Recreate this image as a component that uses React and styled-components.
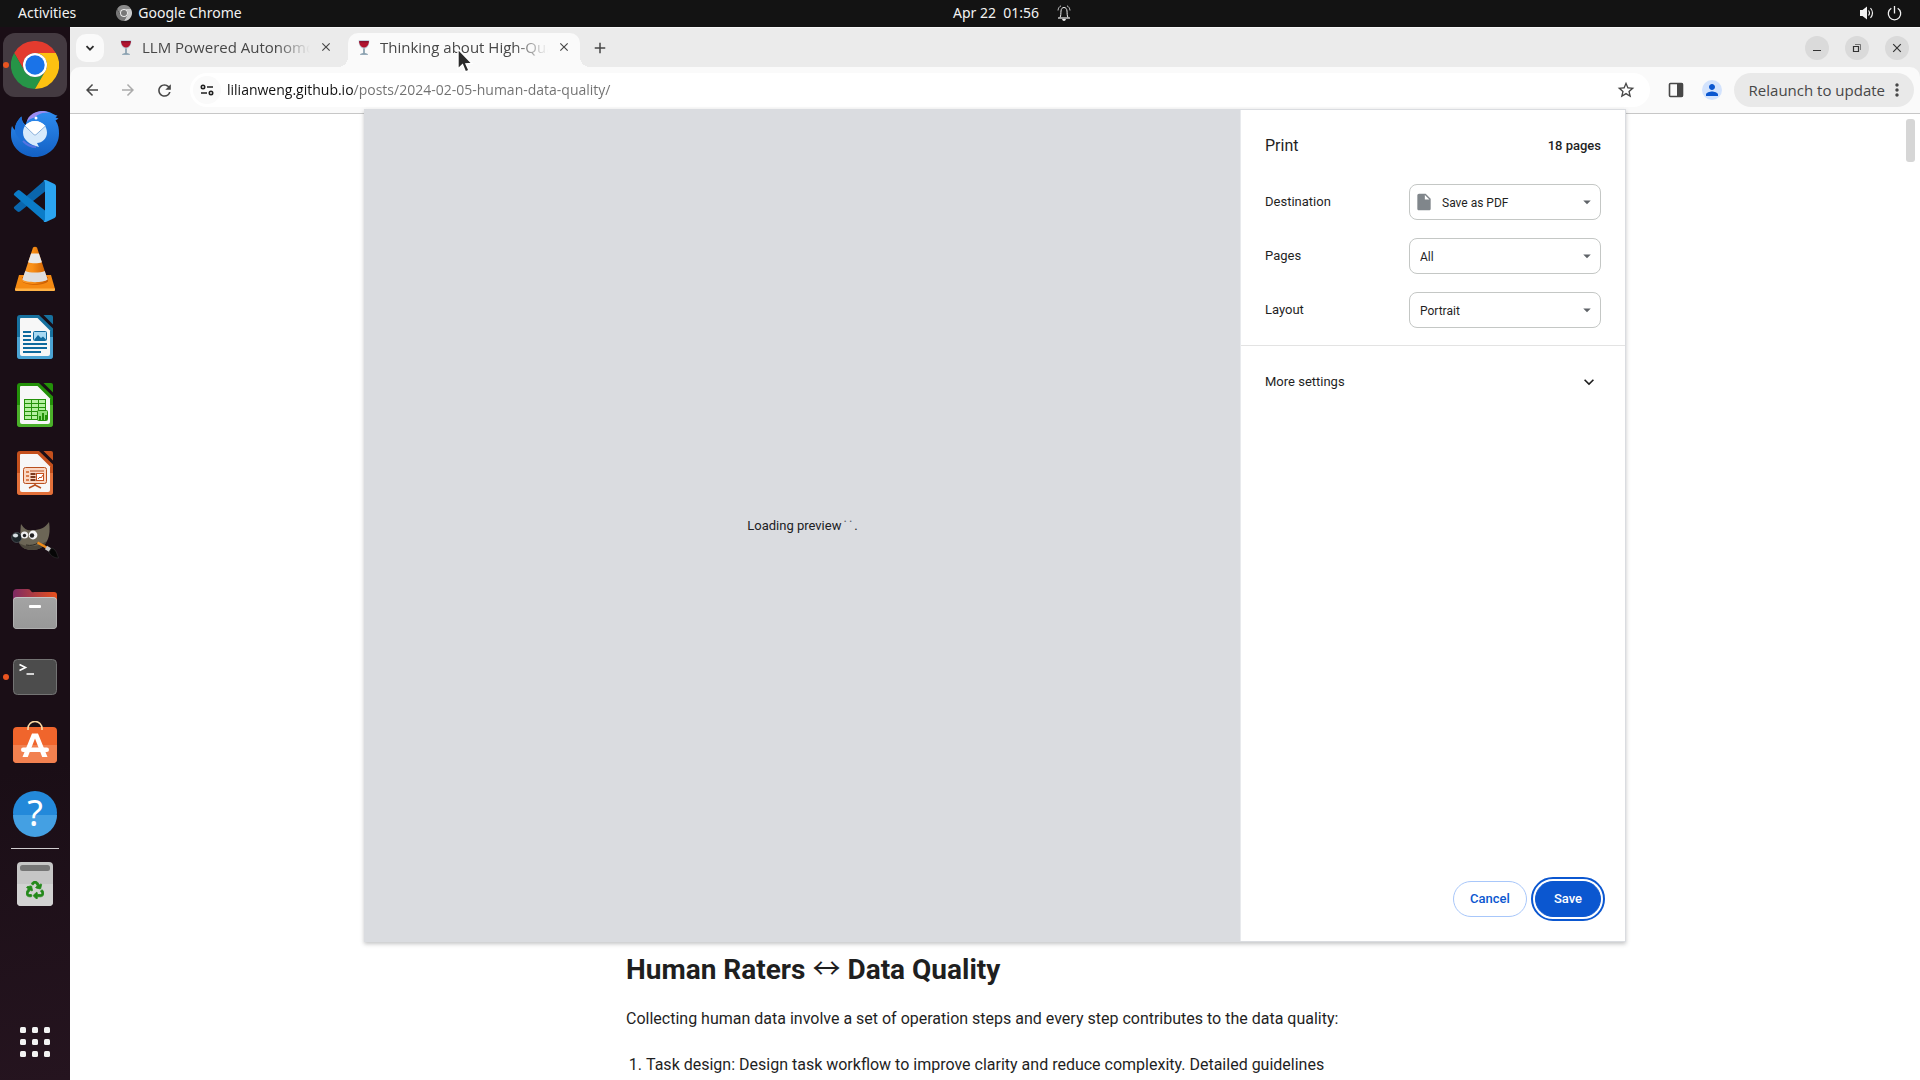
import React from 'react';
import styled, { createGlobalStyle, css } from 'styled-components';
import {
  MdArrowBack,
  MdArrowForward,
  MdRefresh,
  MdStarOutline,
  MdPerson,
  MdMoreVert,
  MdInsertDriveFile,
  MdArrowDropDown,
  MdKeyboardArrowDown,
  MdClose,
  MdAdd,
} from 'react-icons/md';
import { FaRecycle } from 'react-icons/fa';

const shellFont = "'Noto Sans', 'Open Sans', sans-serif";
const browserFont = "'Open Sans', 'Noto Sans', sans-serif";
const pageFont = "Roboto, 'Noto Sans', sans-serif";

const GlobalStyle = createGlobalStyle`
  *, *::before, *::after {
    box-sizing: border-box;
  }

  body {
    margin: 0;
    overflow: hidden;
    font-family: ${shellFont};
  }

  button, input, select {
    margin: 0;
    padding: 0;
    border: 0;
    background: none;
    font: inherit;
    color: inherit;
  }

  svg {
    display: block;
    flex: none;
  }
`;

/* ---------- desktop ---------- */

const Desktop = styled.div`
  display: grid;
  grid-template-columns: 70px minmax(0, 1fr);
  grid-template-rows: 27px minmax(0, 1fr);
  height: 100vh;
  background: #1b0f17;
`;

const TopBar = styled.header`
  grid-column: 1 / -1;
  display: grid;
  grid-template-columns: 1fr auto 1fr;
  align-items: center;
  padding-bottom: 1px;
  background: #131313;
  color: #f2f2f2;
  font-size: 14px;
  line-height: 20px;
`;

const TopLeft = styled.div`
  display: flex;
  align-items: center;
  gap: 40px;
  padding-left: 18px;
`;

const TopButton = styled.button`
  display: flex;
  align-items: center;
  gap: 6px;
  white-space: pre;
`;

const Clock = styled(TopButton)`
  gap: 18px;
  padding-left: 104px;
`;

const TopRight = styled.div`
  display: flex;
  justify-content: flex-end;
  align-items: center;
  gap: 12px;
  padding-right: 18px;
`;

const Dock = styled.nav`
  display: flex;
  flex-direction: column;
  align-items: center;
  gap: 4px;
  padding: 6px 0;
  background: linear-gradient(170deg, #1a0e16 70%, #25141f 100%);
`;

const DockItem = styled.button`
  position: relative;
  display: flex;
  justify-content: center;
  align-items: center;
  width: 64px;
  height: 64px;
  border-radius: 12px;
  background: ${(props) => (props.$active ? '#443a41' : 'transparent')};

  ${(props) =>
    props.$running &&
    css`
      &::before {
        content: '';
        position: absolute;
        left: 0;
        width: 6px;
        height: 6px;
        border-radius: 50%;
        background: #e95420;
      }
    `}
`;

const DockLine = styled.hr`
  width: 48px;
  height: 1px;
  margin: -1px 0;
  border: 0;
  background: #d0cdcf;
`;

const DockSpacer = styled.div`
  flex: 1;
`;

/* ---------- browser window ---------- */

const Browser = styled.div`
  position: relative;
  display: flex;
  flex-direction: column;
  min-height: 0;
  background: #fff;
  font-family: ${browserFont};
`;

const TabStrip = styled.div`
  display: flex;
  align-items: center;
  gap: 6px;
  height: 40px;
  padding: 0 11px 0 6px;
  border-top: 1px solid #f7f7f7;
  background: #ebebeb;
  color: #474747;
`;

const TabSearch = styled.button`
  display: grid;
  place-items: center;
  width: 28px;
  height: 28px;
  border-radius: 10px;
  background: #fafafa;
`;

const Tab = styled.div`
  position: relative;
  display: flex;
  align-self: flex-end;
  align-items: center;
  gap: 8px;
  width: 232px;
  height: 34px;
  padding: 0 8px 7px;
  border-radius: 10px 10px 0 0;

  ${(props) =>
    props.$active &&
    css`
      background: #fafafa;

      &::before,
      &::after {
        content: '';
        position: absolute;
        bottom: 0;
        width: 10px;
        height: 10px;
      }

      &::before {
        right: 100%;
        background: radial-gradient(circle at 0 0, transparent 10px, #fafafa 10px);
      }

      &::after {
        left: 100%;
        background: radial-gradient(circle at 100% 0, transparent 10px, #fafafa 10px);
      }
    `}
`;

const TabTitle = styled.span`
  flex: 1;
  overflow: hidden;
  white-space: nowrap;
  font-size: 15px;
  line-height: 20px;
  mask-image: linear-gradient(90deg, #000 80%, transparent);
`;

const IconButton = styled.button`
  display: grid;
  place-items: center;
  width: ${(props) => props.$size || 28}px;
  height: ${(props) => props.$size || 28}px;
  color: ${(props) => (props.disabled ? '#ababab' : '#474747')};
`;

const WindowControls = styled.div`
  display: flex;
  gap: 16px;
  margin-left: auto;
`;

const WindowButton = styled.button`
  display: grid;
  place-items: center;
  width: 24px;
  height: 24px;
  border-radius: 50%;
  background: #dadada;
  color: #333;
`;

const ToolbarBack = styled.div`
  background: #ebebeb;
`;

const Toolbar = styled.div`
  display: flex;
  align-items: center;
  gap: 8px;
  height: 47px;
  padding: 0 6px 0 8px;
  border-bottom: 1px solid #c7c7c7;
  border-radius: 10px 10px 0 0;
  background: #fafafa;
`;

const Omnibox = styled.form`
  display: flex;
  flex: 1;
  align-items: center;
  gap: 6px;
  height: 34px;
  margin: 0 4px;
  padding: 0 10px 0 3px;
  border-radius: 17px;
  background: #fff;
`;

const SiteInfo = styled.button`
  display: grid;
  place-items: center;
  width: 28px;
  height: 28px;
  border-radius: 50%;
  background: #fafafa;
  color: #1f1f1f;
`;

const Address = styled.input`
  flex: 1;
  min-width: 0;
  padding-bottom: 1px;
  outline: 0;
  background: linear-gradient(90deg, #111 127px, #707070 127px);
  background-clip: text;
  color: transparent;
  font-size: 14px;
  line-height: 20px;
`;

const Avatar = styled.button`
  display: grid;
  place-items: center;
  width: 20px;
  height: 20px;
  margin: 0 4px;
  border-radius: 50%;
  background: #d3e3fd;
  color: #0b57d0;
`;

const Relaunch = styled.button`
  display: flex;
  align-items: center;
  gap: 2px;
  height: 34px;
  padding: 0 7px 1px 15px;
  border-radius: 17px;
  background: #e9e9e9;
  color: #474747;
  font-size: 15px;
  line-height: 20px;
  white-space: nowrap;
`;

/* ---------- page ---------- */

const Page = styled.main`
  display: flex;
  flex: 1;
  min-height: 0;
`;

const Article = styled.article`
  display: flex;
  flex: 1;
  flex-direction: column;
  justify-content: flex-end;
  width: 100%;
  max-width: 720px;
  margin: 0 auto;
  padding-bottom: 2px;
  font-family: ${pageFont};
  font-size: 16px;
  line-height: 26px;
  color: #1f1f1f;

  h2 {
    margin: 0 0 18px;
    font-size: 28px;
    line-height: 36px;
  }

  p {
    margin: 0 0 20px;
  }

  ol {
    margin: 0;
    padding-left: 20px;
  }
`;

const Arrow = styled.span`
  font-family: 'Noto Sans CJK JP', sans-serif;
  font-weight: 400;
  line-height: 1;
`;

const ScrollTrack = styled.div`
  width: 18px;
  padding: 5px 5px 0 4px;
`;

const ScrollThumb = styled.div`
  height: 43px;
  border-radius: 3px;
  background: #d6d6d6;
`;

/* ---------- print dialog ---------- */

const Dialog = styled.section`
  position: absolute;
  top: 82px;
  right: 0;
  left: 0;
  display: flex;
  width: 1262px;
  max-width: 90%;
  height: calc(100% - 220px);
  margin: 0 auto;
  border: 1px solid #dadce0;
  background: #fff;
  box-shadow: 0 2px 4px rgba(60, 64, 67, 0.3);
  font-family: ${pageFont};
  font-size: 13px;
  line-height: 20px;
  color: #1f1f1f;
`;

const Preview = styled.div`
  display: grid;
  flex: 1;
  place-items: center;
  background: #dadce0;
  color: #202124;
`;

const LoadingDot = styled.span`
  display: inline-block;
  padding-left: 2px;
  color: ${(props) => (props.$raised ? '#5f6368' : 'inherit')};
  transform: translateY(${(props) => (props.$raised ? -8 : 0)}px);
`;

const Settings = styled.form`
  display: flex;
  flex-direction: column;
  width: 385px;
  border-left: 1px solid #e8eaed;
`;

const SettingsHead = styled.div`
  display: flex;
  justify-content: space-between;
  align-items: center;
  padding: 24px;

  h1 {
    margin: 0;
    font-size: 16px;
    font-weight: 400;
    line-height: 24px;
  }

  strong {
    font-weight: 500;
  }
`;

const Fields = styled.div`
  display: flex;
  flex-direction: column;
  gap: 18px;
  padding: 2px 24px 17px;
  border-bottom: 1px solid #e3e3e3;
`;

const Field = styled.div`
  display: grid;
  grid-template-columns: 144px 1fr;
  align-items: center;
`;

const SelectBox = styled.div`
  display: grid;
  grid-template-columns: 30px 1fr 28px;
  align-items: center;
  color: #5f6368;

  select {
    grid-area: 1 / 1 / 2 / -1;
    height: 36px;
    padding: 1px 0 0 ${(props) => (props.$icon ? 32 : 10)}px;
    appearance: none;
    border: 1px solid #c4c7c5;
    border-radius: 8px;
    font-size: 12px;
    color: #1f1f1f;
  }

  svg {
    grid-area: 1 / 1;
    justify-self: center;
    pointer-events: none;
  }

  svg:last-child {
    grid-area: 1 / 3;
  }
`;

const MoreSettings = styled.button`
  display: flex;
  justify-content: space-between;
  align-items: center;
  height: 72px;
  padding: 0 26px 0 24px;
`;

const Actions = styled.div`
  display: flex;
  justify-content: flex-end;
  gap: 8px;
  margin-top: auto;
  padding: 24px;
`;

const ActionButton = styled.button`
  height: 36px;
  padding: 0 ${(props) => (props.$primary ? 18 : 16)}px;
  border: 1px solid ${(props) => (props.$primary ? '#0b57d0' : '#a8c7fa')};
  border-radius: 18px;
  background: ${(props) => (props.$primary ? '#0b57d0' : '#fff')};
  color: ${(props) => (props.$primary ? '#fff' : '#0b57d0')};
  font-weight: 500;

  ${(props) =>
    props.$primary &&
    css`
      outline: 2px solid #0b57d0;
      outline-offset: 2px;
    `}
`;

const Pointer = styled.svg`
  position: absolute;
  top: 20px;
  left: 386px;
`;

/* ---------- drawings ---------- */

const Icon48 = ({ children }) => (
  <svg width="48" height="48" viewBox="0 0 48 48" fill="none" aria-hidden="true">
    {children}
  </svg>
);

const ChromeIcon = () => (
  <Icon48>
    <path fill="#e33b2e" d="M24 12h20.8A24 24 0 0 0 3.2 12l10.4 18A12 12 0 0 1 24 12z" />
    <path fill="#269547" d="M3.2 12A24 24 0 0 0 24 48l10.4-18a12 12 0 0 1-20.8 0z" />
    <path fill="#fdc111" d="M44.8 12A24 24 0 0 1 24 48l10.4-18A12 12 0 0 0 24 12z" />
    <circle cx="24" cy="24" r="12" fill="#fff" />
    <circle cx="24" cy="24" r="9.7" fill="#1a73e8" />
  </Icon48>
);

const ThunderbirdIcon = () => (
  <Icon48>
    <defs>
      <linearGradient id="tb-body" x1="0" y1="0" x2="0" y2="1">
        <stop offset="0" stopColor="#2f8df0" />
        <stop offset="1" stopColor="#1360c4" />
      </linearGradient>
    </defs>
    <path
      fill="url(#tb-body)"
      d="M1 17c1 2 2 3 3 4 0-6 3-10 6.500-13.500 0 4 2 7 4 8.500 2-8 9-14 18-14 7 0 9 4 14 4.500l-2 2 3 1-3 2c3 4 3.500 8 3.500 13C48 38 37 48 24 48S0 38 0 26c0-4 0-6 1-9z"
    />
    <path fill="#1b6fd6" d="M4 21c0-6 3-10 6.500-13.500 0 5 3 9 5 11-3 5-4 9-2 14-5-2-9-6-9.500-11.500z" />
    <path fill="#9a8cf2" d="M22 4.500C27 1.500 34 1 38 4c-7-1-10 1-14 4-3 2-5 1-8 5 0-3 2-6 6-8.500z" />
    <circle cx="25" cy="9" r="1.500" fill="#fff" />
    <path
      fill="#d7eafb"
      d="M24 12c7 0 12 5 12 11.500 0 6-5 10.500-10 10.500l2 4c-9-2-16-7-16-14.500C12 17 17 12 24 12z"
    />
    <path fill="#fff" d="M14 17c2-3 6-5 10-5s8 2 10.500 5L25 26q-1 1-2 0z" />
    <path stroke="#86aedb" strokeWidth="1" d="M14 17l9 8.700q1 1 2 0l9.500-8.700" />
    <path stroke="#6d76ea" strokeWidth="2" d="M12 32c3 3 7 6 13 6" opacity=".7" />
  </Icon48>
);

const CodeIcon = () => (
  <Icon48>
    <path fill="#0a66ad" d="M34 3L3.500 29.500q-1.500 1 0 2.500l3 2.500q1 .8 2.500 0L34 14.500z" />
    <path fill="#0b7cc8" d="M34 45L3.500 18.500q-1.500-1 0-2.500l3-2.500q1-.8 2.500 0L34 33.500z" />
    <path fill="#2ba4f0" d="M32.500 44.500q1.500 1 3 .2l8-3.800q1.500-.8 1.500-2.400V9.500q0-1.600-1.500-2.400l-8-3.800q-1.500-.8-3 .2Q34 4 34 6v36q0 2-1.500 2.500z" />
  </Icon48>
);

const VlcIcon = () => (
  <Icon48>
    <defs>
      <linearGradient id="cone" x1="0" y1="0" x2="1" y2="0">
        <stop offset="0" stopColor="#f79a2e" />
        <stop offset=".4" stopColor="#f98f16" />
        <stop offset="1" stopColor="#c65a00" />
      </linearGradient>
    </defs>
    <path fill="#f58a12" d="M8 30h32l4 14q.4 2-1.500 2h-37Q3.600 46 4 44z" />
    <path fill="#ffb347" d="M4 43.500h40v1.200q0 1.300-1.500 1.300h-37Q4 46 4 44.700z" />
    <path fill="#cc5d00" d="M11 36c3 5 23 5 26 0v-4H11z" />
    <path fill="url(#cone)" d="M22 2.500Q24 1 26 2.500L37 36c-3 4-23 4-26 0z" />
    <path fill="#e9e9e9" d="M20.100 8.500h7.800l3 8.700c-3 1.500-10.800 1.500-13.800 0z" />
    <path fill="#dedede" d="M14.300 26c4 2 15.400 2 19.400 0l3 8.500c-4 3.500-21.400 3.500-25.400 0z" />
  </Icon48>
);

const DocIcon = ({ color, dark, children }) => (
  <Icon48>
    <path fill={dark} d="M9 2h19L42 15.500V43q0 3-3 3H9q-3 0-3-3V5q0-3 3-3z" />
    <path fill={color} d="M6 24h36v19q0 3-3 3H9q-3 0-3-3z" />
    <path fill="#f7f7f7" d="M10 5h16.500L39 17.500V41q0 2-2 2H11q-2 0-2-2V6q0-1 1-1z" />
    <path fill={dark} d="M32.500 2H40q2 0 2 2v7.500z" />
    {children}
  </Icon48>
);

const WriterIcon = () => (
  <DocIcon color="#4ba3d3" dark="#17719f">
    <path stroke="#0f6a9e" strokeWidth="2" d="M12 19h8M12 23h8M12 27h8M12 31h24M12 35h24M12 39h18" />
    <rect x="22.500" y="18.500" width="13" height="9" fill="#a6d8f2" stroke="#0f6a9e" rx="1" />
    <path fill="#0f6a9e" d="M23 27l4-5 3 3 2-1.500 3.500 3.500z" />
  </DocIcon>
);

const CalcIcon = () => (
  <DocIcon color="#4bb02a" dark="#239109">
    <rect x="13.500" y="18.500" width="21" height="20" fill="#b4f0a0" stroke="#239109" />
    <path stroke="#239109" d="M13 22.500h22M13 26.500h22M13 30.500h22M13 34.500h22M20.500 18v21M27.500 18v21" />
    <rect x="26.500" y="29.500" width="10" height="10" rx="1" fill="#8fe077" stroke="#239109" />
    <path fill="#239109" d="M28 35h2v4h-2zM31 32h2v7h-2zM34 34h2v5h-2z" />
  </DocIcon>
);

const ImpressIcon = () => (
  <DocIcon color="#e2703a" dark="#c4501d">
    <rect x="12.500" y="18.500" width="23" height="16" rx="2" fill="#fbd8c4" stroke="#b8501f" />
    <path stroke="#d9804f" strokeWidth="2" d="M15 23h3M15 27h3M15 31h3" />
    <path stroke="#7d3a1c" strokeWidth="2" d="M19.500 25h5M19.500 28h5M19.500 31h5" />
    <path stroke="#b8501f" strokeWidth="1" d="M19 22h14" />
    <rect x="25.500" y="24.500" width="7" height="7" fill="#fff" stroke="#c4501d" />
    <path stroke="#c4501d" d="M27 30l2-2 1 1 2-3" />
    <path stroke="#b8501f" strokeWidth="1.500" d="M24 35v2M24 36l-6 3M24 36l6 3" />
  </DocIcon>
);

const GimpIcon = () => (
  <Icon48>
    <path
      fill="#6c6656"
      d="M10 7c4 6 7 7 12 6 7 0 12-2 16-8 1 6 1 14-2 19-3 6-8 9-15 9-6 0-10-2-13-7 2-6 1-13 2-19z"
    />
    <path fill="#4c473c" d="M8 26c6 4 18 5 28-2-3 6-8 9-15 9-6 0-10-2-13-7z" />
    <circle cx="5.700" cy="20.500" r="5" fill="#1c2428" stroke="#5d676c" strokeWidth=".6" />
    <ellipse cx="4.500" cy="18.500" rx="2.600" ry="2" fill="#d6dee2" />
    <circle cx="13.500" cy="18" r="3.600" fill="#eee" />
    <circle cx="13.500" cy="18.500" r="1.700" fill="#222" />
    <circle cx="22" cy="18" r="4.400" fill="#f6f6f6" />
    <circle cx="21" cy="18.500" r="2.200" fill="#222" />
    <path stroke="#2b2821" d="M15 28c5 1 9 0 12-2" />
    <path stroke="#f08b18" strokeWidth="2.500" d="M26.500 25.500l9 5" />
    <path stroke="#c9c9c9" strokeWidth="4" d="M35 30.500l4 2.500" />
    <path fill="#060606" stroke="#3a3a3a" strokeWidth=".5" d="M38 35l2.500-4c4 1 5 4 7 10-4 0-8-2-9.500-6z" />
  </Icon48>
);

const FilesIcon = () => (
  <Icon48>
    <defs>
      <linearGradient id="folder" x1="0" y1="0" x2="1" y2="0">
        <stop offset="0" stopColor="#7d2a63" />
        <stop offset="1" stopColor="#e8511d" />
      </linearGradient>
      <linearGradient id="folder-front" x1="0" y1="0" x2="0" y2="1">
        <stop offset="0" stopColor="#a3a3a3" />
        <stop offset="1" stopColor="#989898" />
      </linearGradient>
    </defs>
    <path fill="url(#folder)" d="M2 8q0-4 4-4h11q2 0 3 2t3 1h20q3 0 3 3v8H2z" />
    <rect x="2" y="12" width="44" height="32" rx="4" fill="#c4c4c4" />
    <rect x="2.500" y="13" width="43" height="30.500" rx="3.500" fill="url(#folder-front)" />
    <rect x="18" y="20" width="12" height="3" rx="1" fill="#fff" />
  </Icon48>
);

const TerminalIcon = () => (
  <Icon48>
    <rect x="2.500" y="6.500" width="43" height="35" rx="4" fill="#4c4c4c" stroke="#737373" />
    <path stroke="#fff" strokeWidth="1.600" d="M8.500 11.500l6 3-6 3M15.500 21h7.500" />
  </Icon48>
);

const SoftwareIcon = () => (
  <Icon48>
    <rect x="2" y="6" width="44" height="36" rx="4" fill="#f0652c" />
    <path fill="#f28150" d="M2 24h44v14q0 4-4 4H6q-4 0-4-4z" />
    <path stroke="#fbd9a5" strokeWidth="1.600" d="M17 9V7.500a7 7 0 0 1 14 0V9" />
    <path fill="#fff" d="M21 12.500h6L36.500 36h-5.300L24 17.500 16.800 36h-5.300z" />
    <rect x="10" y="26.500" width="28" height="4.500" rx="2.200" fill="#fff" />
  </Icon48>
);

const HelpIcon = () => (
  <Icon48>
    <circle cx="24" cy="24" r="22" fill="#2389da" />
    <path fill="#44a0e3" d="M2 26h44a22 22 0 0 1-44 0z" />
    <text x="24" y="37" textAnchor="middle" fill="#fff" fontFamily="Noto Sans" fontSize="36">
      ?
    </text>
  </Icon48>
);

const TrashIcon = () => (
  <Icon48>
    <rect x="6" y="2" width="36" height="44" rx="4" fill="#c6c6c6" />
    <path fill="#d2d2d2" d="M6 24h36v18q0 4-4 4H10q-4 0-4-4z" />
    <rect x="9" y="5" width="30" height="6" rx="2.500" fill="#767676" />
    <FaRecycle x="15" y="21" size={18} color="#23891a" stroke="#23891a" strokeWidth="24" />
  </Icon48>
);

const AppsIcon = () => (
  <Icon48>
    {[9, 21, 33].map((y) =>
      [9, 21, 33].map((x) => (
        <rect key={`${x}-${y}`} x={x} y={y} width="6" height="6" rx="1.500" fill="#f2f2f2" />
      ))
    )}
  </Icon48>
);

const GreyChromeIcon = () => (
  <svg width="16" height="16" viewBox="0 0 48 48" aria-hidden="true">
    <path fill="#8a8a8a" d="M24 12h20.800A24 24 0 0 0 3.200 12l10.400 18A12 12 0 0 1 24 12z" />
    <path fill="#757575" d="M3.200 12A24 24 0 0 0 24 48l10.400-18a12 12 0 0 1-20.800 0z" />
    <path fill="#c9c9c9" d="M44.800 12A24 24 0 0 1 24 48l10.400-18A12 12 0 0 0 24 12z" />
    <circle cx="24" cy="24" r="12" fill="#f1f1f1" />
    <circle cx="24" cy="24" r="9" fill="#777" />
  </svg>
);

const BellIcon = () => (
  <svg width="14" height="16" viewBox="0 0 14 16" fill="none" stroke="#ececec" aria-hidden="true">
    <path d="M3 12.500c1-2 .8-4 1-6.500.2-2.300 1.300-3.500 3-3.500s2.800 1.200 3 3.500c.2 2.500 0 4.500 1 6.500" />
    <path d="M1 13h12" strokeWidth="1.200" />
    <path d="M1 5.500C1.200 3 2.500 1.500 4 .8M13 5.500C12.800 3 11.500 1.500 10 .8" opacity=".8" />
    <path fill="#ececec" stroke="none" d="M5 14h4q-.5 2-2 2t-2-2z" />
  </svg>
);

const VolumeIcon = () => (
  <svg width="16" height="16" viewBox="0 0 16 16" fill="none" stroke="#f2f2f2" aria-hidden="true">
    <path fill="#f2f2f2" stroke="none" d="M1 5h2.500L8 1.500v13L3.500 11H1z" />
    <path d="M9.500 5.500q2 2.500 0 5M11.500 3q4 5 0 10" strokeWidth="1.200" />
  </svg>
);

const PowerIcon = () => (
  <svg width="15" height="15" viewBox="0 0 15 15" fill="none" stroke="#f2f2f2" aria-hidden="true">
    <path d="M4.300 2.300a6.200 6.200 0 1 0 6.400 0M7.500 0v7.500" strokeWidth="1.300" />
  </svg>
);

const WineIcon = () => (
  <svg width="16" height="16" viewBox="0 0 16 16" aria-hidden="true">
    <path fill="#c3d3dd" d="M2.700 1h10.600c.3 4.500-1.300 8-4.500 8.700V14l3 1v1H4.200v-1l3-1V9.700C4 9 2.400 5.500 2.700 1z" />
    <path fill="#8aa0ae" d="M7.200 9.500h1.600V14l3 1v.8H4.200V15l3-1z" />
    <path fill="#b0142f" d="M3.200 2.500h9.600c0 3.500-2 6-4.800 6s-4.800-2.500-4.800-6z" />
    <path fill="#8a1230" d="M3.200 2h9.600v1.500H3.200z" />
  </svg>
);

const ChevronIcon = () => (
  <svg width="10" height="10" viewBox="0 0 10 10" fill="none" stroke="#2c2c2c" aria-hidden="true">
    <path d="M1.500 3.200L5 6.700l3.500-3.500" strokeWidth="1.800" />
  </svg>
);

const TuneIcon = () => (
  <svg width="14" height="12" viewBox="0 0 14 12" fill="none" stroke="currentColor" strokeWidth="1.600" aria-hidden="true">
    <circle cx="3" cy="3" r="1.700" />
    <path d="M7 3h6M1 9h6" />
    <circle cx="11" cy="9" r="1.700" />
  </svg>
);

const SidePanelIcon = () => (
  <svg width="16" height="16" viewBox="0 0 16 16" aria-hidden="true">
    <rect x="1.500" y="1.500" width="13" height="13" rx="1" fill="none" stroke="#474747" strokeWidth="1.600" />
    <path fill="#474747" d="M9 1h5.500v14H9z" />
  </svg>
);

const dockApps = [
  { name: 'Google Chrome', icon: ChromeIcon, active: true, running: true },
  { name: 'Thunderbird Mail', icon: ThunderbirdIcon },
  { name: 'Visual Studio Code', icon: CodeIcon },
  { name: 'VLC media player', icon: VlcIcon },
  { name: 'LibreOffice Writer', icon: WriterIcon },
  { name: 'LibreOffice Calc', icon: CalcIcon },
  { name: 'LibreOffice Impress', icon: ImpressIcon },
  { name: 'GIMP', icon: GimpIcon },
  { name: 'Files', icon: FilesIcon },
  { name: 'Terminal', icon: TerminalIcon, running: true },
  { name: 'Ubuntu Software', icon: SoftwareIcon },
  { name: 'Help', icon: HelpIcon },
];

const tabs = [
  { title: 'LLM Powered Autonomous Agents' },
  { title: 'Thinking about High-Quality Human Data', active: true },
];

const fields = [
  { id: 'destination', label: 'Destination', value: 'Save as PDF', icon: true },
  { id: 'pages', label: 'Pages', value: 'All' },
  { id: 'layout', label: 'Layout', value: 'Portrait' },
];

const SystemBar = () => (
  <TopBar>
    <TopLeft>
      <TopButton>Activities</TopButton>
      <TopButton>
        <GreyChromeIcon />
        Google Chrome
      </TopButton>
    </TopLeft>
    <Clock>
      {'Apr 22  01:56'}
      <BellIcon />
    </Clock>
    <TopRight>
      <VolumeIcon />
      <PowerIcon />
    </TopRight>
  </TopBar>
);

const AppDock = () => (
  <Dock>
    {dockApps.map(({ name, icon: Icon, active, running }) => (
      <DockItem key={name} aria-label={name} $active={active} $running={running}>
        <Icon />
      </DockItem>
    ))}
    <DockLine />
    <DockItem aria-label="Trash">
      <TrashIcon />
    </DockItem>
    <DockSpacer />
    <DockItem aria-label="Show applications">
      <AppsIcon />
    </DockItem>
  </Dock>
);

const BrowserHeader = () => (
  <>
    <TabStrip>
      <TabSearch aria-label="Search tabs">
        <ChevronIcon />
      </TabSearch>
      {tabs.map(({ title, active }) => (
        <Tab key={title} $active={active}>
          <WineIcon />
          <TabTitle>{title}</TabTitle>
          <IconButton $size={16} aria-label="Close tab">
            <MdClose size={14} />
          </IconButton>
        </Tab>
      ))}
      <IconButton aria-label="New tab">
        <MdAdd size={18} />
      </IconButton>
      <WindowControls>
        <WindowButton aria-label="Minimize">
          <svg width="10" height="10" viewBox="0 0 10 10" stroke="currentColor">
            <path d="M1 7.500h8" />
          </svg>
        </WindowButton>
        <WindowButton aria-label="Restore">
          <svg width="10" height="10" viewBox="0 0 10 10" fill="none" stroke="currentColor">
            <path d="M1.500 3.500h5v5h-5z" strokeWidth="1.200" />
            <path d="M3 1.500h5.500V7" opacity=".6" />
          </svg>
        </WindowButton>
        <WindowButton aria-label="Close">
          <svg width="10" height="10" viewBox="0 0 10 10" stroke="currentColor">
            <path d="M1.200 1.200l7.600 7.600M8.800 1.200L1.200 8.800" strokeWidth="1.200" />
          </svg>
        </WindowButton>
      </WindowControls>
    </TabStrip>
    <ToolbarBack>
      <Toolbar>
        <IconButton aria-label="Back">
          <MdArrowBack size={18} />
        </IconButton>
        <IconButton aria-label="Forward" disabled>
          <MdArrowForward size={18} />
        </IconButton>
        <IconButton aria-label="Reload">
          <MdRefresh size={19} />
        </IconButton>
        <Omnibox>
          <SiteInfo type="button" aria-label="Site information">
            <TuneIcon />
          </SiteInfo>
          <Address
            aria-label="Address"
            defaultValue="lilianweng.github.io/posts/2024-02-05-human-data-quality/"
          />
          <IconButton type="button" aria-label="Bookmark this page">
            <MdStarOutline size={20} />
          </IconButton>
        </Omnibox>
        <IconButton aria-label="Side panel">
          <SidePanelIcon />
        </IconButton>
        <Avatar aria-label="Profile">
          <MdPerson size={18} />
        </Avatar>
        <Relaunch>
          Relaunch to update
          <MdMoreVert size={20} />
        </Relaunch>
      </Toolbar>
    </ToolbarBack>
  </>
);

const PrintDialog = () => (
  <Dialog role="dialog" aria-label="Print">
    <Preview>
      <span>
        Loading preview
        <LoadingDot $raised>.</LoadingDot>
        <LoadingDot $raised>.</LoadingDot>
        <LoadingDot>.</LoadingDot>
      </span>
    </Preview>
    <Settings>
      <SettingsHead>
        <h1>Print</h1>
        <strong>18 pages</strong>
      </SettingsHead>
      <Fields>
        {fields.map(({ id, label, value, icon }) => (
          <Field key={id}>
            <label htmlFor={id}>{label}</label>
            <SelectBox $icon={icon}>
              <select id={id}>
                <option>{value}</option>
              </select>
              {icon && <MdInsertDriveFile size={20} color="#80868b" />}
              <MdArrowDropDown size={18} />
            </SelectBox>
          </Field>
        ))}
      </Fields>
      <MoreSettings type="button">
        More settings
        <MdKeyboardArrowDown size={20} />
      </MoreSettings>
      <Actions>
        <ActionButton type="button">Cancel</ActionButton>
        <ActionButton type="button" $primary>
          Save
        </ActionButton>
      </Actions>
    </Settings>
  </Dialog>
);

const App = () => (
  <>
    <GlobalStyle />
    <Desktop>
      <SystemBar />
      <AppDock />
      <Browser>
        <BrowserHeader />
        <Page>
          <Article>
            <h2>
              Human Raters <Arrow>↔</Arrow> Data Quality
            </h2>
            <p>
              Collecting human data involve a set of operation steps and every step contributes to
              the data quality:
            </p>
            <ol>
              <li>
                Task design: Design task workflow to improve clarity and reduce complexity. Detailed
                guidelines
              </li>
            </ol>
          </Article>
          <ScrollTrack>
            <ScrollThumb />
          </ScrollTrack>
        </Page>
        <PrintDialog />
        <Pointer width="18" height="28" viewBox="0 0 18 28" aria-hidden="true">
          <path
            d="M2 2v20l4.500-4.200L9.500 25l3.500-1.500-3-6.700 6-.4z"
            fill="#2b2b2b"
            stroke="#fff"
            strokeWidth="1.400"
          />
        </Pointer>
      </Browser>
    </Desktop>
  </>
);

export default App;
